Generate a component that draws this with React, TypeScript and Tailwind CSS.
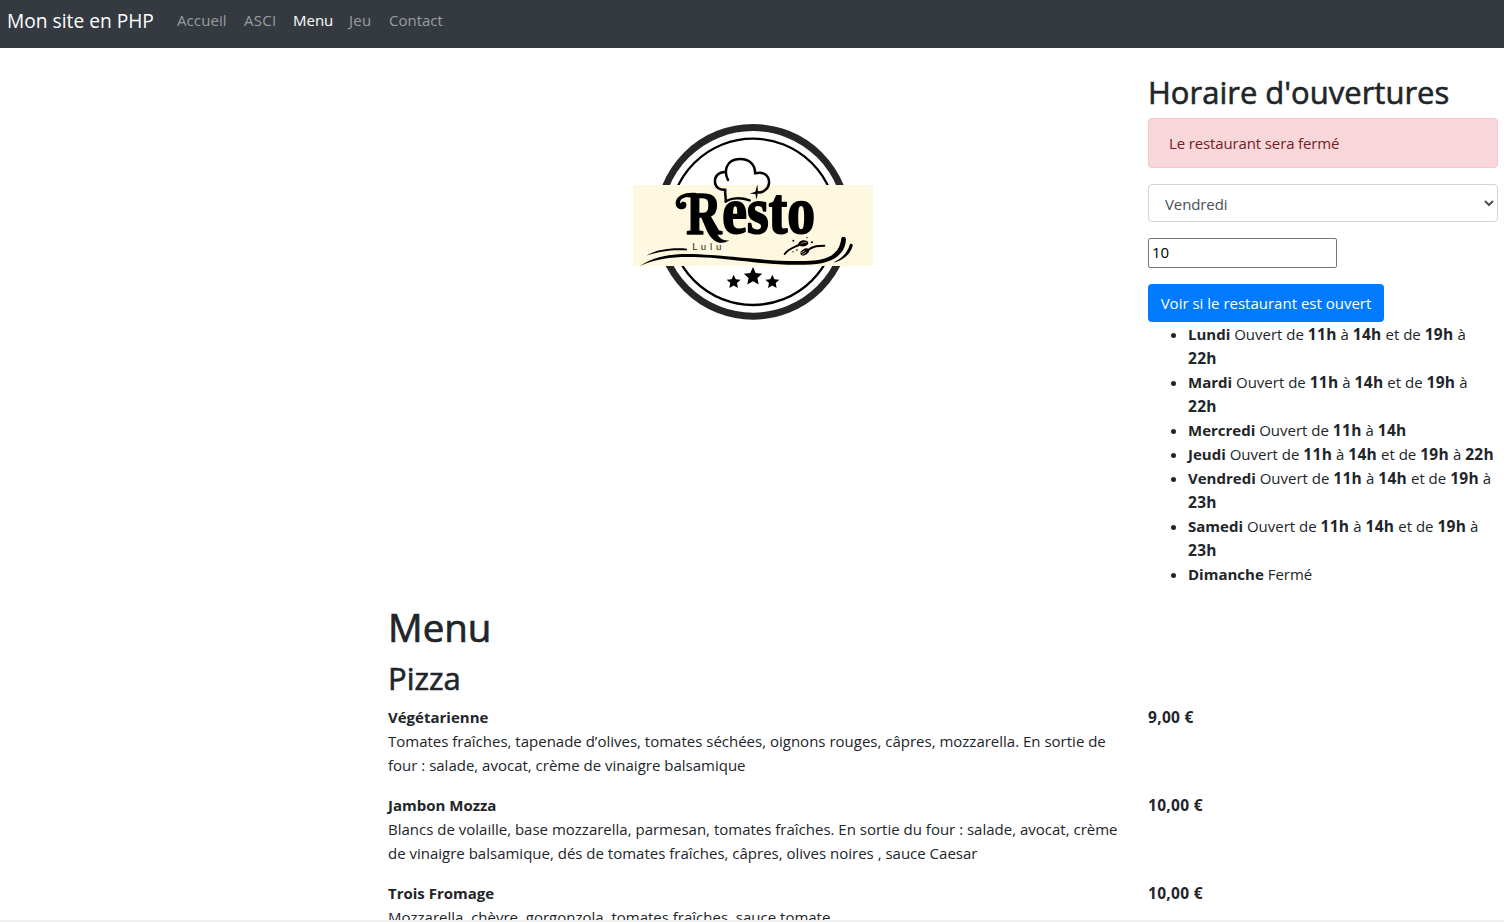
import type { ReactNode } from "react";

const hours: { day: string; slots: [string, string][]; breakLast: boolean }[] = [
  { day: "Lundi", slots: [["11h", "14h"], ["19h", "22h"]], breakLast: true },
  { day: "Mardi", slots: [["11h", "14h"], ["19h", "22h"]], breakLast: true },
  { day: "Mercredi", slots: [["11h", "14h"]], breakLast: false },
  { day: "Jeudi", slots: [["11h", "14h"], ["19h", "22h"]], breakLast: false },
  { day: "Vendredi", slots: [["11h", "14h"], ["19h", "23h"]], breakLast: true },
  { day: "Samedi", slots: [["11h", "14h"], ["19h", "23h"]], breakLast: true },
  { day: "Dimanche", slots: [], breakLast: false },
];

const pizzas = [
  {
    name: "Végétarienne",
    price: "9,00 €",
    lines: [
      "Tomates fraîches, tapenade d’olives, tomates séchées, oignons rouges, câpres, mozzarella. En sortie de",
      "four : salade, avocat, crème de vinaigre balsamique",
    ],
  },
  {
    name: "Jambon Mozza",
    price: "10,00 €",
    lines: [
      "Blancs de volaille, base mozzarella, parmesan, tomates fraîches. En sortie du four : salade, avocat, crème",
      "de vinaigre balsamique, dés de tomates fraîches, câpres, olives noires , sauce Caesar",
    ],
  },
  {
    name: "Trois Fromage",
    price: "10,00 €",
    lines: ["Mozzarella, chèvre, gorgonzola, tomates fraîches, sauce tomate"],
  },
];

function Num({ children }: { children: ReactNode }) {
  return <strong className="text-[15.5px] font-bold tracking-[0.3px]">{children}</strong>;
}

function Star({ x, y, r }: { x: number; y: number; r: number }) {
  const points = Array.from({ length: 10 }, (_, i) => {
    const a = (Math.PI / 5) * i - Math.PI / 2;
    const d = i % 2 ? r * 0.48 : r;
    return `${x + d * Math.cos(a)},${y + d * Math.sin(a)}`;
  }).join(" ");
  return <polygon points={points} />;
}

function Logo() {
  return (
    <svg className="h-[196px] w-[240px]" viewBox="24 27 720 588" aria-label="Resto Lulu">
      <circle cx="384" cy="320.5" r="283" fill="#fff" stroke="#262626" strokeWidth="21" />
      <circle cx="384" cy="320.5" r="249.5" fill="none" stroke="#000" strokeWidth="7" />
      <rect x="24" y="210" width="720" height="243" fill="#fff8e1" />
      <g fill="none" stroke="#000" strokeWidth="7.5" strokeLinecap="round" strokeLinejoin="round">
        <path d="M309 195C296 170 302 132 345 132C375 132 391 150 390 175C415 168 434 182 432 205C430 223 412 234 399 232" />
        <path d="M302 171C280 170 268 185 270 203C272 218 285 226 301 224C298 236 304 246 302 260C320 247 350 248 374 256" />
      </g>
      <path d="M397 208L399 230L395 254L391 237L374 236L391 230Z" />
      <g fontFamily="'Liberation Serif', serif" fontWeight="700" stroke="#000" strokeLinejoin="round">
        <text x="184" y="356" fontSize="182" textLength="106" lengthAdjust="spacingAndGlyphs" strokeWidth="5">R</text>
        <text x="292" y="355" fontSize="194" textLength="278" lengthAdjust="spacingAndGlyphs" strokeWidth="6">esto</text>
      </g>
      <path d="M214 234C178 230 151 244 152 266C153 285 180 289 184 273C187 259 170 257 166 266C162 252 176 242 214 246Z" />
      <path d="M260 318C275 354 280 380 313 376C288 393 262 380 247 350L228 306Z" />
      <text x="202" y="405" fontFamily="Lato, sans-serif" fontSize="29" textLength="87" fill="#222">Lulu</text>
      <path d="M44 453C103 414 172 413 258 420C380 429 450 440 540 438C608 437 643 420 649 370C651 363 661 363 663 372C661 423 617 449 540 449C444 452 370 438 260 428C170 423 105 424 44 453Z" />
      <path d="M64 422C98 402 140 398 186 401V406C140 404 108 407 64 422Z" />
      <path d="M624 443C650 430 666 416 674 389C677 384 685 387 683 393C674 421 653 437 624 443Z" />
      <g fill="none" stroke="#000" strokeLinecap="round">
        <path d="M479 417C490 402 504 398 522 390" strokeWidth="6" />
        <path d="M548 406C566 392 580 392 598 392" strokeWidth="6" />
      </g>
      <ellipse cx="535" cy="385" rx="15" ry="9" transform="rotate(-8 535 385)" />
      <path d="M527 388C534 381 541 381 546 383" stroke="#fff8e1" strokeWidth="1.5" fill="none" />
      <ellipse cx="539" cy="411" rx="14" ry="9" transform="rotate(-30 539 411)" />
      <path d="M526 415L539 407M531 419L544 411" stroke="#fff8e1" strokeWidth="2" />
      <circle cx="505" cy="377" r="3" />
      <circle cx="546" cy="368" r="2" />
      <circle cx="561" cy="382" r="3" />
      <circle cx="516" cy="405" r="2.5" />
      <circle cx="504" cy="410" r="2" />
      <Star x={384} y={485} r={29} />
      <Star x={326} y={501} r={22} />
      <Star x={442} y={501} r={22} />
    </svg>
  );
}

function Schedule() {
  return (
    <ul className="ml-10 list-disc">
      {hours.map(({ day, slots, breakLast }) => (
        <li key={day} className="h-6 whitespace-nowrap has-[br]:h-12">
          <strong className="font-bold">{day}</strong>{" "}
          {slots.length === 0 ? (
            "Fermé"
          ) : (
            <>
              Ouvert de <Num>{slots[0][0]}</Num> à <Num>{slots[0][1]}</Num>
              {slots[1] && (
                <>
                  {" "}et de <Num>{slots[1][0]}</Num> à {breakLast && <br />}
                  <Num>{slots[1][1]}</Num>
                </>
              )}
            </>
          )}
        </li>
      ))}
    </ul>
  );
}

export default function App() {
  return (
    <div className="flex h-[922px] flex-col overflow-hidden bg-white font-['Open_Sans','Noto_Sans',sans-serif] text-[15px] leading-6 text-[#212529]">
      <nav className="flex h-12 shrink-0 items-start bg-[#343a40] pl-[7px] text-white">
        <a className="w-[170px] pt-[6px] text-[19.2px] leading-[30px] whitespace-nowrap">Mon site en PHP</a>
        <div className="flex pt-2 whitespace-nowrap text-[#9a9da0]">
          <a className="w-[67px] tracking-[0.1px]">Accueil</a>
          <a className="w-[49px] tracking-[0.3px]">ASCI</a>
          <a className="w-14 text-white">Menu</a>
          <a className="w-10 tracking-[0.3px]">Jeu</a>
          <a>Contact</a>
        </div>
      </nav>
      <div className="flex min-h-0 flex-1 flex-col overflow-hidden border-b-2 border-[#f0f0f0]">
        <div className="flex h-[539px] shrink-0">
          <div className="flex flex-1 justify-center pt-[76px] pr-4 pl-[373px]">
            <Logo />
          </div>
          <aside className="mr-[6px] w-[350px] shrink-0 pt-[25px]">
            <h2 className="mb-[7px] text-[31px] leading-[38px] font-medium whitespace-nowrap [-webkit-text-stroke:0.6px_#212529]">Horaire d'ouvertures</h2>
            <div className="mb-4 h-[50px] rounded border border-[#f5c6cb] bg-[#f8d7da] px-5 py-3 tracking-[-0.13px] text-[#721c24]">
              Le restaurant sera fermé
            </div>
            <select defaultValue="Vendredi" className="mb-4 block h-[38px] w-full rounded border border-[#ced4da] bg-white px-3 pt-px tracking-[-0.1px] text-[#495057]">
              {hours.map(({ day }) => (
                <option key={day}>{day}</option>
              ))}
            </select>
            <input defaultValue="10" className="mb-4 block h-[30px] w-[189px] rounded-[2px] border border-[#767676] px-[3px] pb-0.5 text-black" />
            <button className="block h-[38px] w-[236px] rounded bg-[#007bff] whitespace-nowrap text-white">Voir si le restaurant est ouvert</button>
            <Schedule />
          </aside>
        </div>
        <main className="pl-[388px]">
          <h1 className="mt-[16px] mb-2 text-[38.5px] leading-[48px] font-medium [-webkit-text-stroke:0.7px_#212529]">Menu</h1>
          <h2 className="mb-2 text-[31px] leading-[38px] font-medium [-webkit-text-stroke:0.6px_#212529]">Pizza</h2>
          {pizzas.map(({ name, price, lines }) => (
            <div key={name} className="mb-4 flex">
              <div className="w-[760px] shrink-0 whitespace-nowrap">
                <strong className="block h-6 font-bold">{name}</strong>
                {lines.map((line) => (
                  <p key={line}>{line}</p>
                ))}
              </div>
              <Num>{price}</Num>
            </div>
          ))}
        </main>
      </div>
    </div>
  );
}
